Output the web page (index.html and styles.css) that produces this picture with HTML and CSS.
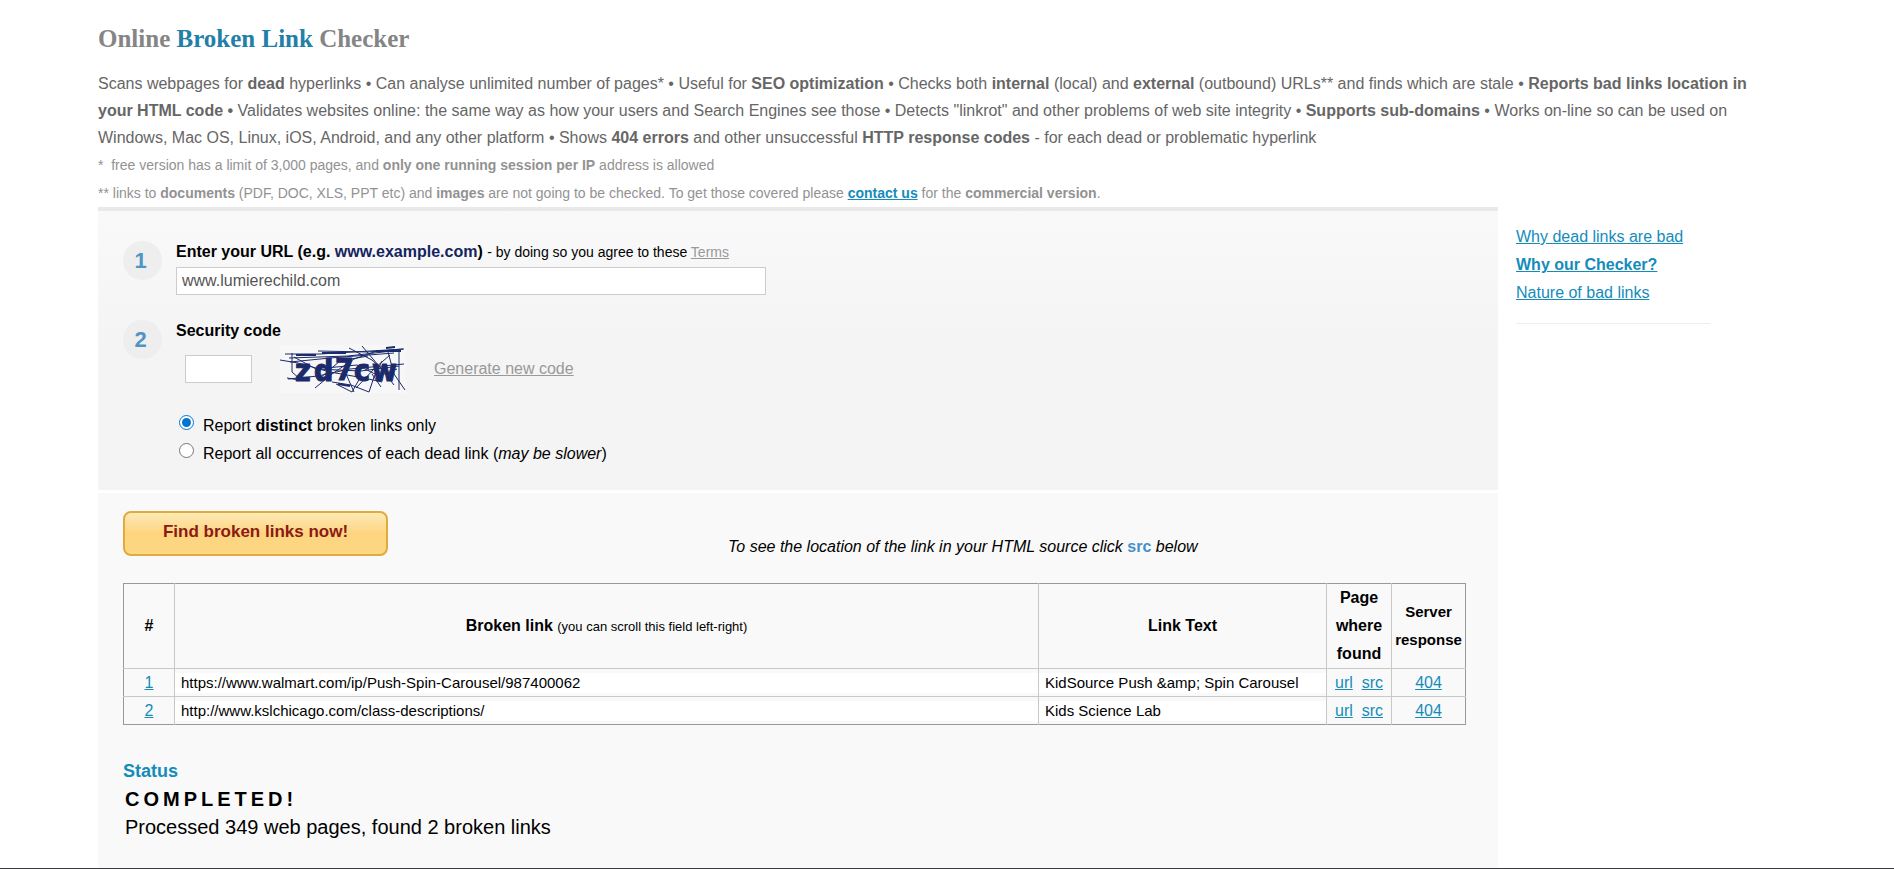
FILE: index.html
```html
<!DOCTYPE html>
<html lang="en">
<head>
<meta charset="utf-8">
<title>Online Broken Link Checker</title>
<link rel="stylesheet" href="styles.css">
</head>
<body>
<div class="page">
  <header class="intro">
    <h1 class="title">Online <span class="title-accent">Broken Link</span> Checker</h1>
    <p class="features">Scans webpages for <b>dead</b> hyperlinks • Can analyse unlimited number of pages* • Useful for <b>SEO optimization</b> • Checks both <b>internal</b> (local) and <b>external</b> (outbound) URLs** and finds which are stale • <b>Reports bad links location in your HTML code •</b> Validates websites online: the same way as how your users and Search Engines see those • Detects "linkrot" and other problems of web site integrity • <b>Supports sub-domains</b> • Works on-line so can be used on Windows, Mac OS, Linux, iOS, Android, and any other platform • Shows <b>404 errors</b> and other unsuccessful <b>HTTP response codes</b> - for each dead or problematic hyperlink</p>
    <p class="footnote">*&nbsp; free version has a limit of 3,000 pages, and <b>only one running session per IP</b> address is allowed</p>
    <p class="footnote">** links to <b>documents</b> (PDF, DOC, XLS, PPT etc) and <b>images</b> are not going to be checked. To get those covered please <a class="contact" href="#">contact us</a> for the <b>commercial version</b>.</p>
  </header>
  <div class="columns">
    <main class="main">
      <form class="form" id="checker">
        <div class="step">
          <span class="badge">1</span>
          <div class="step-body">
            <div class="step-label"><label for="url"><b>Enter your URL (e.g. <span class="example">www.example.com</span>)</b></label> <span class="terms">- by doing so you agree to these <a class="muted" href="#">Terms</a></span></div>
            <input class="field url-field" id="url" type="text" value="www.lumierechild.com">
          </div>
        </div>
        <div class="step">
          <span class="badge">2</span>
          <div class="step-body">
            <div class="step-label"><label for="code"><b>Security code</b></label></div>
            <div class="captcha-row">
              <input class="field code-field" id="code" type="text">
              <svg class="captcha" viewBox="20 11 126 48" role="img" aria-label="Security code picture">
                <rect x="20" y="11" width="126" height="48" fill="#f7f7f7"/>
                <g class="captcha-text">
                  <text x="35" y="47">z</text><text x="54" y="47">d</text><text x="75" y="46">7</text><text x="94" y="47">c</text><text x="112" y="47">w</text>
                </g>
                <g fill="none" stroke="#1b2a6b" stroke-width="1">
                  <path d="M25 20H60L144 15M29 24L88 22L132 17M20 26L38 29L70 38L104 44L122 48M32 19V38L40 45M58 17L108 18L143 15M28 45L58 42L90 35L144 30M30 28L70 24L134 19M89 14L112 26L123 36M102 12L124 38L134 51M55 54L72 40L94 25L117 17M139 15V56M128 18L134 40L145 56M72 48L91 51L109 58L114 43L122 27M76 50L92 58L101 42M86 40L94 58M112 40L121 53M34 23L56 35L101 37L139 32M66 34L97 31L119 42L137 35M27 44L39 46M60 44L80 27L108 22M96 54L115 34L130 21"/>
                  <path d="M36 21H56M62 19H86M116 17H141M126 14L135 13M78 50L90 52" stroke-width="2"/>
                </g>
              </svg>
              <a class="muted" href="#">Generate new code</a>
            </div>
            <div class="options">
              <label class="option"><input type="radio" name="mode" checked><span>Report <b>distinct</b> broken links only</span></label>
              <label class="option"><input type="radio" name="mode"><span>Report all occurrences of each dead link (<i>may be slower</i>)</span></label>
            </div>
          </div>
        </div>
      </form>
      <section class="results">
        <div class="action-row">
          <button class="find" type="submit" form="checker">Find broken links now!</button>
          <p class="hint">To see the location of the link in your HTML source click <b class="hint-src">src</b> below</p>
        </div>
        <table class="links">
          <colgroup><col class="c-num"><col><col class="c-text"><col class="c-page"><col class="c-code"></colgroup>
          <thead>
            <tr><th>#</th><th>Broken link <small class="scroll-note">(you can scroll this field left-right)</small></th><th>Link Text</th><th>Page where found</th><th class="server">Server response</th></tr>
          </thead>
          <tbody>
            <tr>
              <td><a href="#">1</a></td>
              <td class="cell"><input class="cell-field" type="text" aria-label="Broken link 1" readonly value="https://www.walmart.com/ip/Push-Spin-Carousel/987400062"></td>
              <td class="cell"><input class="cell-field" type="text" aria-label="Link text 1" readonly value="KidSource Push &amp;amp; Spin Carousel"></td>
              <td><a href="#">url</a>&nbsp; <a href="#">src</a></td>
              <td><a href="#">404</a></td>
            </tr>
            <tr>
              <td><a href="#">2</a></td>
              <td class="cell"><input class="cell-field" type="text" aria-label="Broken link 2" readonly value="http://www.kslchicago.com/class-descriptions/"></td>
              <td class="cell"><input class="cell-field" type="text" aria-label="Link text 2" readonly value="Kids Science Lab"></td>
              <td><a href="#">url</a>&nbsp; <a href="#">src</a></td>
              <td><a href="#">404</a></td>
            </tr>
          </tbody>
        </table>
        <h2 class="status">Status</h2>
        <p class="completed">COMPLETED!</p>
        <p class="summary">Processed 349 web pages, found 2 broken links</p>
      </section>
    </main>
    <nav class="side">
      <a href="#">Why dead links are bad</a>
      <a href="#"><b>Why our Checker?</b></a>
      <a href="#">Nature of bad links</a>
    </nav>
  </div>
</div>
</body>
</html>
```
FILE: styles.css
```css
* { box-sizing: border-box; }
body {
  margin: 0;
  min-height: 100vh;
  display: flex;
  background: #fff;
  border-bottom: 1px solid #3c3c40;
  color: #000;
  font: 16px/28px "Liberation Sans", Arial, sans-serif;
}
h1, h2, p { margin: 0; }
a { color: #148cba; }
.page {
  flex: 1;
  display: flex;
  flex-direction: column;
  padding: 25px 98px 0;
}
.title {
  color: #858585;
  font: bold 25px/28px "Liberation Serif", "Times New Roman", serif;
}
.title-accent { color: #2280a8; }
.features { margin-top: 17px; padding-right: 26px; color: #666; line-height: 27px; }
.footnote { color: #929292; font-size: 14px; }
.contact { font-weight: bold; }
.columns { flex: 1; display: flex; gap: 18px; }
.main { flex: 1; display: flex; flex-direction: column; gap: 3px; }
.form {
  padding: 27px 25px 22px;
  border-top: 4px solid #e9e9e9;
  background: linear-gradient(#f9f9f9, #f4f4f4 50%);
}
.step { display: flex; gap: 14px; }
.badge {
  flex: none;
  width: 39px;
  height: 39px;
  margin-top: 3px;
  padding-right: 4px;
  border-radius: 50%;
  background: #eee;
  color: #4f94c4;
  font-weight: bold;
  font-size: 22px;
  line-height: 39px;
  text-align: center;
}
.step-body { flex: 1; padding-bottom: 22px; }
.step:last-child .step-body { padding-bottom: 0; }
.example { color: #14245e; }
.terms { font-size: 14px; }
.muted { color: #999; }
.field {
  display: block;
  height: 28px;
  padding: 0 5px;
  border: 1px solid #ccc;
  background: #fff;
  color: #555;
  font: inherit;
}
.url-field { width: 590px; max-width: 100%; margin-top: 1px; }
.captcha-row { display: flex; align-items: center; gap: 28px; padding-left: 9px; }
.code-field { width: 67px; }
.captcha { width: 126px; height: 48px; }
.captcha-text {
  fill: #1b2a6b;
  stroke: #1b2a6b;
  stroke-width: 1;
  font: bold 30px "DejaVu Sans Condensed", "DejaVu Sans", sans-serif;
}
.options { padding-top: 19px; }
.option { display: flex; gap: 9px; }
.option input { width: 15px; height: 15px; margin: 3px 0 0 3px; accent-color: #0075d0; }
.results { flex: 1; padding: 18px 32px 20px 25px; background: #f9f9f9; }
.action-row { display: flex; gap: 340px; }
.find {
  width: 265px;
  height: 45px;
  padding-bottom: 4px;
  border: 2px solid #dfac3c;
  border-radius: 8px;
  background: linear-gradient(#fee9b8, #fdd57f 50%, #fdd783);
  color: #8c1a14;
  font: bold 17px "Liberation Sans", Arial, sans-serif;
}
.hint { padding-top: 22px; font-style: italic; }
.hint-src { color: #4a90c8; font-style: normal; }
.links {
  width: 100%;
  margin-top: 22px;
  table-layout: fixed;
  border-collapse: collapse;
  border: 1px solid #999;
  text-align: center;
}
.links th, .links td { padding: 0; }
.links th + th, .links td + td { border-left: 1px solid #c8c8c8; }
.links td { border-top: 1px solid #c8c8c8; line-height: 27px; }
.c-num { width: 51px; }
.c-text { width: 288px; }
.c-page { width: 65px; }
.c-code { width: 74px; }
.scroll-note { font-size: 13px; font-weight: normal; }
.links .server { font-size: 15px; }
.cell-field {
  display: block;
  width: 100%;
  height: 20px;
  padding: 0 6px;
  border: 0;
  background: #fff;
  color: #000;
  font: 15px "Liberation Sans", Arial, sans-serif;
}
.status { margin-top: 32px; color: #148cba; font-size: 18px; line-height: 28px; }
.completed { padding-left: 2px; font-weight: bold; font-size: 20px; letter-spacing: 4px; }
.summary { padding-left: 2px; font-size: 20px; }
.side {
  width: 280px;
  padding-top: 16px;
  display: flex;
  flex-direction: column;
  align-items: flex-start;
}
.side::after { content: ""; width: 194px; margin-top: 16px; border-top: 1px solid #eee; }
```
